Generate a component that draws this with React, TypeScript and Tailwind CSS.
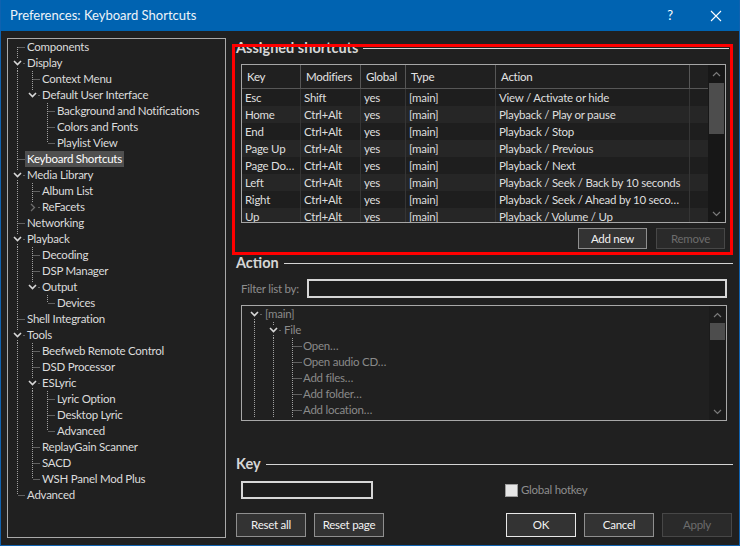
import React from 'react'

type TreeNode = { label: string; level: number; kind?: 'open' | 'closed'; selected?: boolean }

const PREF_TREE: TreeNode[] = [
  { label: 'Components', level: 0 },
  { label: 'Display', level: 0, kind: 'open' },
  { label: 'Context Menu', level: 1 },
  { label: 'Default User Interface', level: 1, kind: 'open' },
  { label: 'Background and Notifications', level: 2 },
  { label: 'Colors and Fonts', level: 2 },
  { label: 'Playlist View', level: 2 },
  { label: 'Keyboard Shortcuts', level: 0, selected: true },
  { label: 'Media Library', level: 0, kind: 'open' },
  { label: 'Album List', level: 1 },
  { label: 'ReFacets', level: 1, kind: 'closed' },
  { label: 'Networking', level: 0 },
  { label: 'Playback', level: 0, kind: 'open' },
  { label: 'Decoding', level: 1 },
  { label: 'DSP Manager', level: 1 },
  { label: 'Output', level: 1, kind: 'open' },
  { label: 'Devices', level: 2 },
  { label: 'Shell Integration', level: 0 },
  { label: 'Tools', level: 0, kind: 'open' },
  { label: 'Beefweb Remote Control', level: 1 },
  { label: 'DSD Processor', level: 1 },
  { label: 'ESLyric', level: 1, kind: 'open' },
  { label: 'Lyric Option', level: 2 },
  { label: 'Desktop Lyric', level: 2 },
  { label: 'Advanced', level: 2 },
  { label: 'ReplayGain Scanner', level: 1 },
  { label: 'SACD', level: 1 },
  { label: 'WSH Panel Mod Plus', level: 1 },
  { label: 'Advanced', level: 0 },
]

// only the visible part of the action list; it carries on below (scrolled)
const ACTION_TREE: TreeNode[] = [
  { label: '[main]', level: 0, kind: 'open' },
  { label: 'File', level: 1, kind: 'open' },
  { label: 'Open…', level: 2 },
  { label: 'Open audio CD…', level: 2 },
  { label: 'Add files…', level: 2 },
  { label: 'Add folder…', level: 2 },
  { label: 'Add location…', level: 2 },
]

const SHORTCUTS = [
  ['Esc', 'Shift', 'yes', '[main]', 'View / Activate or hide'],
  ['Home', 'Ctrl+Alt', 'yes', '[main]', 'Playback / Play or pause'],
  ['End', 'Ctrl+Alt', 'yes', '[main]', 'Playback / Stop'],
  ['Page Up', 'Ctrl+Alt', 'yes', '[main]', 'Playback / Previous'],
  ['Page Do…', 'Ctrl+Alt', 'yes', '[main]', 'Playback / Next'],
  ['Left', 'Ctrl+Alt', 'yes', '[main]', 'Playback / Seek / Back by 10 seconds'],
  ['Right', 'Ctrl+Alt', 'yes', '[main]', 'Playback / Seek / Ahead by 10 seco…'],
  ['Up', 'Ctrl+Alt', 'yes', '[main]', 'Playback / Volume / Up'],
]

function hasNextSibling(list: TreeNode[], i: number, level: number, openEnd: boolean) {
  for (let j = i + 1; j < list.length; j++) {
    if (list[j].level < level) return false
    if (list[j].level === level) return true
  }
  return openEnd
}

type JointMode = 'pass' | 'blank' | 'leaf' | 'open' | 'closed'

function Joint({ w, mode, top, bottom }: { w: number; mode: JointMode; top?: boolean; bottom?: boolean }) {
  const x = Math.floor(w / 2) + 0.5
  const dot = { stroke: '#a0a0a0', strokeWidth: 1, strokeDasharray: '1 1' }
  return (
    <svg width={w} height={16} className="shrink-0">
      {mode === 'pass' && <line x1={x} y1={0} x2={x} y2={16} {...dot} />}
      {mode === 'leaf' && (
        <>
          {top && <line x1={x} y1={0} x2={x} y2={8} {...dot} />}
          {bottom && <line x1={x} y1={8} x2={x} y2={16} {...dot} />}
          <line x1={x + 1} y1={8.5} x2={w} y2={8.5} {...dot} />
        </>
      )}
      {(mode === 'open' || mode === 'closed') && (
        <>
          {top && <line x1={x} y1={0} x2={x} y2={3} {...dot} />}
          {bottom && <line x1={x} y1={13} x2={x} y2={16} {...dot} />}
          <rect x={x + 6} y={8} width={1} height={1} fill="#a0a0a0" />
        </>
      )}
      {mode === 'open' && (
        <polyline points={`${x - 3.5},6 ${x},9.5 ${x + 3.5},6`} fill="none" stroke="#d8d8d8" strokeWidth={1.6} />
      )}
      {mode === 'closed' && (
        <polyline points={`${x - 1.5},5 ${x + 2},8.5 ${x - 1.5},12`} fill="none" stroke="#6e6e6e" strokeWidth={1.3} />
      )}
    </svg>
  )
}

function Tree({ items, w, dim, openEnd = false }: { items: TreeNode[]; w: number; dim?: boolean; openEnd?: boolean }) {
  return (
    <div className="flex flex-col">
      {items.map((node, i) => {
        const cells: React.ReactNode[] = []
        for (let k = 0; k < node.level; k++) {
          cells.push(<Joint key={k} w={w} mode={hasNextSibling(items, i, k, openEnd) ? 'pass' : 'blank'} />)
        }
        cells.push(
          <Joint
            key="own"
            w={w}
            mode={node.kind ?? 'leaf'}
            top={!(i === 0 && node.level === 0)}
            bottom={hasNextSibling(items, i, node.level, openEnd)}
          />,
        )
        return (
          <div key={i} className="flex h-4 items-center">
            {cells}
            <span
              className={
                node.selected
                  ? 'whitespace-nowrap bg-[#4f4f4f] px-[2px] leading-4 text-white'
                  : dim
                    ? 'whitespace-nowrap px-[1px] leading-4 text-[#8a8a8a]'
                    : 'whitespace-nowrap px-[2px] leading-4 text-[#dcdcdc]'
              }
            >
              {node.label}
            </span>
          </div>
        )
      })}
    </div>
  )
}

function Chevron({ up }: { up?: boolean }) {
  return (
    <svg width={9} height={6}>
      <polyline
        points={up ? '1,5 4.5,1.5 8,5' : '1,1 4.5,4.5 8,1'}
        fill="none"
        stroke="#7a7a7a"
        strokeWidth={1.2}
      />
    </svg>
  )
}

function GroupHeader({ title, className }: { title: string; className: string }) {
  return (
    <div className={`flex h-4 items-center ${className}`}>
      <span className="text-[14.5px] font-bold leading-4 tracking-normal text-[#d6d6d6]">{title}</span>
      <div className="ml-[5px] h-px flex-1 bg-[#d4d4d4]" />
    </div>
  )
}

function Btn({ label, kind, className = '' }: { label: string; kind?: 'default' | 'disabled'; className?: string }) {
  const look =
    kind === 'default'
      ? 'border-[#e8e8e8] bg-[#333333] text-[#f2f2f2]'
      : kind === 'disabled'
        ? 'border-[#474747] bg-[#2a2a2a] text-[#6c6c6c]'
        : 'border-[#8f8f8f] bg-[#333333] text-[#f2f2f2]'
  return (
    <div className={`flex h-full items-center justify-center border ${look} ${className}`}>{label}</div>
  )
}

function ShortcutTable() {
  return (
    <div className="ml-[5px] mt-2 flex h-[159px] w-[485px] border border-[#a6a6a6]">
      <div className="flex flex-1 flex-col overflow-hidden">
        <div className="grid h-6 shrink-0 grid-cols-[59px_60px_45px_90px_194px_1fr] border-b border-[#575757] text-[#e4e4e4]">
          {['Key', 'Modifiers', 'Global', 'Type', 'Action', ''].map((h, i) => (
            <div
              key={i}
              className={i < 5 ? 'flex items-center border-r border-[#575757] px-[5px]' : 'flex items-center'}
            >
              {h}
            </div>
          ))}
        </div>
        {SHORTCUTS.map((row, r) => (
          <div
            key={r}
            className={
              r % 2 === 0
                ? 'grid h-[17px] shrink-0 grid-cols-[59px_60px_45px_90px_194px_1fr] bg-[#1e1e1e]'
                : 'grid h-[17px] shrink-0 grid-cols-[59px_60px_45px_90px_194px_1fr] bg-[#262626]'
            }
          >
            {row.map((c, i) => (
              <div key={i} className="overflow-hidden whitespace-nowrap border-r border-[#353535] px-[3px] leading-[17px] text-[#dedede]">
                {c}
              </div>
            ))}
            <div />
          </div>
        ))}
      </div>
      <div className="flex w-[17px] shrink-0 flex-col bg-[#171717]">
        <div className="flex h-[17px] items-center justify-center">
          <Chevron up />
        </div>
        <div className="mx-[1px] mt-px h-[51px] bg-[#4d4d4d]" />
        <div className="flex-1" />
        <div className="flex h-[17px] items-center justify-center">
          <Chevron />
        </div>
      </div>
    </div>
  )
}

function ActionTree() {
  return (
    <div className="ml-[5px] mt-[7px] flex h-[116px] w-[486px] border border-[#a8a8a8]">
      <div className="flex-1 overflow-hidden pl-[3px]">
        <Tree items={ACTION_TREE} w={19} dim openEnd />
      </div>
      <div className="flex w-[17px] shrink-0 flex-col bg-[#1b1b1b]">
        <div className="flex h-[17px] items-center justify-center">
          <Chevron up />
        </div>
        <div className="mx-[1px] h-[17px] bg-[#4d4d4d]" />
        <div className="flex-1" />
        <div className="flex h-[17px] items-center justify-center">
          <Chevron />
        </div>
      </div>
    </div>
  )
}

export default function App() {
  return (
    <div className="relative flex h-[546px] w-[740px] flex-col overflow-hidden border-x border-b border-[#0f62b0] bg-[#202020] font-['Lato','Liberation_Sans',sans-serif] text-[11.5px] tracking-[-0.25px] text-[#dedede]">
      <div className="flex h-[31px] shrink-0 items-center bg-[#0063b1]">
        <span className="pl-[9px] text-[13px] tracking-normal text-[#eef3f9]">Preferences: Keyboard Shortcuts</span>
        <div className="ml-auto flex h-full">
          <div className="flex w-[46px] items-center justify-center text-[13px] text-white">?</div>
          <div className="flex w-[46px] items-center justify-center">
            <svg width={12} height={12}>
              <path d="M1 1 L11 11 M11 1 L1 11" stroke="#ffffff" strokeWidth={1.1} />
            </svg>
          </div>
        </div>
      </div>

      <div className="flex flex-1">
        <div className="ml-[6px] mt-[7px] h-[500px] w-[219px] shrink-0 overflow-hidden border border-[#a9a9a9] pl-[2px]">
          <Tree items={PREF_TREE} w={15} />
        </div>

        <div className="ml-[10px] flex w-[497px] flex-col">
          <GroupHeader title="Assigned shortcuts" className="mr-1 mt-[9px]" />
          <ShortcutTable />
          <div className="mt-[5px] flex h-[21px] justify-end gap-[9px] pr-2">
            <Btn label="Add new" className="w-[69px]" />
            <Btn label="Remove" kind="disabled" className="w-[69px]" />
          </div>

          <GroupHeader title="Action" className="mt-[6px]" />
          <div className="ml-[5px] mt-2 flex h-[19px] items-center">
            <span className="w-[66px] text-[#8d8d8d]">Filter list by:</span>
            <div className="h-full w-[420px] border-2 border-[#d6d6d6] bg-[#1c1c1c]" />
          </div>
          <ActionTree />

          <GroupHeader title="Key" className="mt-[35px]" />
          <div className="ml-[5px] mt-[9px] flex h-[18px] items-center">
            <div className="h-full w-[132px] border-2 border-[#d6d6d6] bg-[#1c1c1c]" />
            <div className="ml-[132px] h-[13px] w-[13px] border border-[#9c9c9c] bg-[#e6e6e6]" />
            <span className="ml-[3px] text-[#8d8d8d]">Global hotkey</span>
          </div>

          <div className="mt-[14px] flex h-6">
            <Btn label="Reset all" className="w-[70px]" />
            <Btn label="Reset page" className="ml-2 w-[70px]" />
            <Btn label="OK" kind="default" className="ml-[122px] w-[70px]" />
            <Btn label="Cancel" className="ml-2 w-[70px]" />
            <Btn label="Apply" kind="disabled" className="ml-2 w-[70px]" />
          </div>
        </div>
      </div>

      {/* red annotation frame around the assigned shortcuts group */}
      <div className="pointer-events-none absolute left-[231px] top-[44px] h-[211px] w-[501px] border-[3px] border-[#ff0000]" />
    </div>
  )
}
